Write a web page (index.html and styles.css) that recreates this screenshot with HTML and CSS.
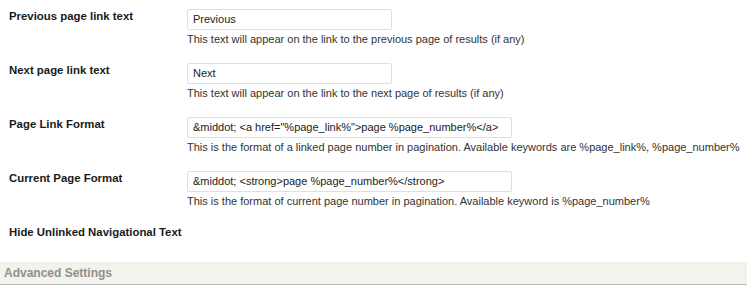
FILE: index.html
```html
<!DOCTYPE html>
<html>
<head>
<meta charset="utf-8">
<link rel="stylesheet" href="styles.css">
</head>
<body>
<div class="form">
  <div class="row">
    <div class="label">Previous page link text</div>
    <div class="field">
      <div class="input short">Previous</div>
      <div class="desc">This text will appear on the link to the previous page of results (if any)</div>
    </div>
  </div>
  <div class="row">
    <div class="label">Next page link text</div>
    <div class="field">
      <div class="input short">Next</div>
      <div class="desc">This text will appear on the link to the next page of results (if any)</div>
    </div>
  </div>
  <div class="row">
    <div class="label">Page Link Format</div>
    <div class="field">
      <div class="input long">&amp;middot; &lt;a href="%page_link%"&gt;page %page_number%&lt;/a&gt;</div>
      <div class="desc">This is the format of a linked page number in pagination. Available keywords are %page_link%, %page_number%</div>
    </div>
  </div>
  <div class="row">
    <div class="label">Current Page Format</div>
    <div class="field">
      <div class="input long">&amp;middot; &lt;strong&gt;page %page_number%&lt;/strong&gt;</div>
      <div class="desc">This is the format of current page number in pagination. Available keyword is %page_number%</div>
    </div>
  </div>
  <div class="row last">
    <div class="label">Hide Unlinked Navigational Text</div>
  </div>
</div>
<div class="section">Advanced Settings</div>
</body>
</html>
```
FILE: styles.css
```css
body {
  margin: 0;
  background: #fff;
  font-family: "Liberation Sans", Arial, sans-serif;
  font-size: 11px;
  color: #333;
}
.form {
  display: flex;
  flex-direction: column;
  padding-top: 8px;
}
.row {
  display: flex;
  height: 54px;
}
.row.last {
  height: 38px;
  padding-top: 0;
  box-sizing: border-box;
}
.label {
  width: 178px;
  padding-left: 9px;
  padding-top: 2px;
  font-weight: bold;
  font-size: 11.4px;
  color: #1a1a1a;
}
.field {
  display: flex;
  flex-direction: column;
  padding-top: 1px;
}
.input {
  box-sizing: border-box;
  height: 21px;
  border: 1px solid #dfdfdf;
  border-radius: 2px;
  padding: 3px 0 0 5px;
  color: #222;
  background: #fff;
  white-space: nowrap;
}
.short { width: 205px; }
.long { width: 325px; }
.desc {
  margin-top: 3px;
  color: #333;
}
.section {
  height: 23px;
  box-sizing: border-box;
  background: #f3f2ec;
  border-bottom: 1px solid #bbb;
  padding: 4px 0 0 4px;
  font-weight: bold;
  font-size: 12px;
  color: #909090;
}
```
